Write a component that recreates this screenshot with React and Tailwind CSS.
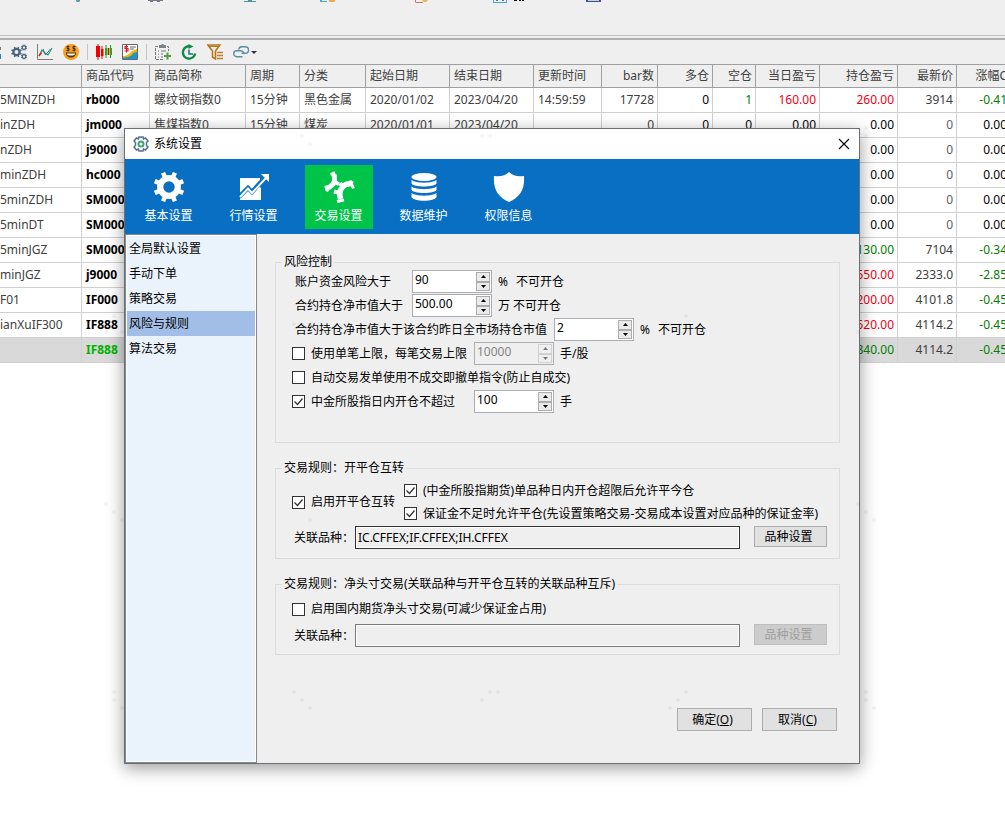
import React, { useState } from 'react';

const COLUMNS = [
  { title: '', width: 'w-[82px]', align: 'left' },
  { title: '商品代码', width: 'w-[68px]', align: 'left' },
  { title: '商品简称', width: 'w-[96px]', align: 'left' },
  { title: '周期', width: 'w-[54px]', align: 'left' },
  { title: '分类', width: 'w-[66px]', align: 'left' },
  { title: '起始日期', width: 'w-[84px]', align: 'left' },
  { title: '结束日期', width: 'w-[84px]', align: 'left' },
  { title: '更新时间', width: 'w-[68px]', align: 'left' },
  { title: 'bar数', width: 'w-[56px]', align: 'right' },
  { title: '多仓', width: 'w-[55px]', align: 'right' },
  { title: '空仓', width: 'w-[43px]', align: 'right' },
  { title: '当日盈亏', width: 'w-[64px]', align: 'right' },
  { title: '持仓盈亏', width: 'w-[78px]', align: 'right' },
  { title: '最新价', width: 'w-[59px]', align: 'right' },
  { title: '涨幅C%', width: 'w-[64px]', align: 'right' },
];

const ROWS = [
  ['5MINZDH', 'rb000', '螺纹钢指数0', '15分钟', '黑色金属', '2020/01/02', '2023/04/20', '14:59:59', '17728', '0', '1', '160.00', '260.00', '3914', '-0.41%'],
  ['inZDH', 'jm000', '焦煤指数0', '15分钟', '煤炭', '2020/01/01', '2023/04/20', '', '0', '0', '0', '0.00', '0.00', '0', '0.00%'],
  ['nZDH', 'j9000', '', '', '', '', '', '', '', '', '', '', '0.00', '0', '0.00%'],
  ['minZDH', 'hc000', '', '', '', '', '', '', '', '', '', '', '0.00', '0', '0.00%'],
  ['5minZDH', 'SM000', '', '', '', '', '', '', '', '', '', '', '0.00', '0', '0.00%'],
  ['5minDT', 'SM000', '', '', '', '', '', '', '', '', '', '', '0.00', '0', '0.00%'],
  ['5minJGZ', 'SM000', '', '', '', '', '', '', '', '', '', '', '-130.00', '7104', '-0.34%'],
  ['minJGZ', 'j9000', '', '', '', '', '', '', '', '', '', '', '550.00', '2333.0', '-2.85%'],
  ['F01', 'IF000', '', '', '', '', '', '', '', '', '', '', '200.00', '4101.8', '-0.45%'],
  ['ianXuIF300', 'IF888', '', '', '', '', '', '', '', '', '', '', '520.00', '4114.2', '-0.45%'],
  ['', 'IF888', '', '', '', '', '', '', '', '', '', '', '-840.00', '4114.2', '-0.45%'],
];

const SELECTED_ROW = 10;

const cellColor = (col, value, rowIndex) => {
  if (col === 1) return rowIndex === SELECTED_ROW ? 'font-bold text-[#00b400]' : 'font-bold text-black';
  if (col === 9) return 'text-black';
  if (col === 10) return value === '0' ? 'text-black' : 'text-[#008000]';
  if (col === 11 || col === 12 || col === 14) {
    if (value.startsWith('-')) return 'text-[#008000]';
    return parseFloat(value) > 0 ? 'text-[#f00014]' : 'text-black';
  }
  if (col === 13 && value === '0') return 'text-[#606060]';
  return 'text-[#404040]';
};

const RibbonIcons = () => (
  <svg width="610" height="3" viewBox="0 0 610 3" aria-hidden="true">
    <path d="M76 0h4v1l-1 1h-2l-1-1z" fill="#5a9aa8" />
    <path d="M148 0h15v1h-3v1h-3v-1h-4v1h-3v-1h-2z" fill="#77778c" />
    <path d="M244 1h12v1h-12zM248 0h4v1h-4z" fill="#4f939c" />
    <path d="M320 0h2v1h5v1h-7z" fill="#4aa8c8" />
    <path d="M329 0h6v1l-1 1h-4l-1-1z" fill="#f2a93c" />
    <path d="M415 0h1v2h7v1h-7l-1-1z" fill="#c07a60" />
    <path d="M422 0h6l-2 2h-2z" fill="#f2b04c" />
    <path d="M493 0h1v2h12v-2h1v3h-14z" fill="#4aa8c8" />
    <path d="M496 0h2v1h-2zM502 0h2v1h-2z" fill="#3a7fb0" />
    <path d="M514 0h3v1h-3zM519 0h2v1h-2zM522 0h2v1h-2z" fill="#111" />
    <path d="M586 0h15v2h-15z" fill="#3f5480" />
    <path d="M588 0h11v1h-11z" fill="#c5cedd" />
  </svg>
);

const Cog = ({ cx, cy, r, color, teeth = 8 }) => (
  <g stroke={color} fill="none">
    <circle cx={cx} cy={cy} r={r} strokeWidth={r * 0.7} />
    {Array.from({ length: teeth }, (_, i) => (
      <path
        key={i}
        d={`M${cx} ${cy - r}V${cy - r * 1.75}`}
        strokeWidth={r * 0.5}
        transform={`rotate(${(i + 0.5) * (360 / teeth)} ${cx} ${cy})`}
      />
    ))}
  </g>
);

const toolIcons = {
  cogs: (
    <>
      <Cog cx={5.5} cy={8} r={3.1} color="#46617e" />
      <Cog cx={13} cy={3.6} r={1.8} color="#46617e" />
      <Cog cx={13} cy={12.4} r={1.8} color="#46617e" />
    </>
  ),
  curve: (
    <>
      <path d="M.5 0v15.5H16" stroke="#7c7c7c" fill="none" />
      <path d="M2 12l3-6 3 3 3 2 4-7" stroke="#1fa05c" strokeWidth="1.2" fill="none" />
      <path d="M2 12l2.500-3.500" stroke="#e02020" strokeWidth="1.4" />
      <path d="M6 5l2.500 6 5-6" stroke="#4a6aa8" fill="none" />
    </>
  ),
  smile: (
    <>
      <circle cx="8" cy="8" r="8" fill="#f7a11a" />
      <path d="M3 8.500h10c0 3.500-2 5-5 5s-5-1.500-5-5z" fill="#5a3207" />
      <path d="M4 9.500h8c0 1.500-1 2-4 2s-4-.5-4-2z" fill="#fff" />
      <path d="M6.500 2.500H4v2h2v2H3.500M5 1.500v6M12.500 2.500H10v2h2v2H9.500M11 1.500v6" stroke="#3b2206" strokeWidth=".9" fill="none" />
    </>
  ),
  candles: (
    <>
      <path d="M2 0v16M6 2v13" stroke="#f00000" />
      <path d="M0 2h4v11H0zM5 5h2.500v7H5z" fill="#f00000" />
      <path d="M10 1v13M14.500 1v13" stroke="#2a9a1a" />
      <path d="M9 4h2.500v7H9zM13.500 4h2.500v7h-2.500z" fill="#35a31c" />
      <path d="M12.500 4v7" stroke="#f00000" />
    </>
  ),
  report: (
    <>
      <path d="M.5.5h15v15H.5z" fill="#fff" stroke="#666" />
      <path d="M1 12c4 0 6-2 9-5 2-1 3-1 5-2v5l-6 5H1z" fill="#f0b400" />
      <path d="M1 13.500c5 0 8-1 10-4 1-1 2-1 4-1.500v7H1z" fill="#1b95d2" />
      <path d="M6 2.500H3v2h3v2.500H2.500M4.500 1v7.500" stroke="#d4202c" strokeWidth="1.200" fill="none" />
      <path d="M8 3h6M8 5h4" stroke="#666" />
    </>
  ),
  listAdd: (
    <>
      <path d="M8 15.500H.5v-13H3M12 2.500h1.500V7" stroke="#6f787e" fill="none" strokeDasharray="3 1" />
      <path d="M4 1h2l1-1h1l1 1h2v3H4z" fill="#7a848a" />
      <path d="M3 7h1M6 7h5M3 10h1M6 10h2M3 13h1M6 13h2" stroke="#6f787e" />
      <path d="M12.500 8.500v7M9 12h7" stroke="#5a9a35" strokeWidth="2" />
    </>
  ),
  refresh: (
    <>
      <path d="M8 2.200A6.200 6.200 0 1 0 14.200 9.500" stroke="#0e8a4a" strokeWidth="2.400" fill="none" />
      <path d="M7.500 0v5l5-2.500z" fill="#0e8a4a" />
      <path d="M8 5.500V10h4" stroke="#1c6e8c" strokeWidth="1.500" fill="none" />
    </>
  ),
  filter: (
    <>
      <path d="M.8 1h12L8.500 7v8l-3-2V7z" fill="none" stroke="#b8761c" strokeWidth="1.600" />
      <path d="M2 2.500h9" stroke="#b8761c" />
      <path d="M10 8.500h6M10 11.500h6M10 14.500h6" stroke="#c0812a" strokeWidth="1.600" />
    </>
  ),
  link: (
    <g fill="none" stroke="#5a8ca8" strokeWidth="1.400">
      <path d="M9.500 12.700H3.700a3 3 0 0 1 0-6H8a3 3 0 0 1 2.800 3.500" />
      <path d="M5.800 5.500A3 3 0 0 1 8.500 2.700h3.800a3 3 0 0 1 0 6.500H8.500" />
    </g>
  ),
};

const ToolButton = ({ name, label }) => (
  <button type="button" aria-label={label} className="h-4 w-4 shrink-0">
    <svg width="16" height="16" viewBox="0 0 16 16">{toolIcons[name]}</svg>
  </button>
);

const Toolbar = () => (
  <div className="flex h-6 items-center gap-2.5 overflow-hidden bg-[#efefef]">
    <svg width="1" height="16" viewBox="0 0 1 16" aria-hidden="true">
      <path d="M0 3h1v3H0z" fill="#777" />
      <path d="M0 10h1v5H0z" fill="#2389b8" />
    </svg>
    <ToolButton name="cogs" label="设置" />
    <ToolButton name="curve" label="曲线" />
    <ToolButton name="smile" label="盈亏" />
    <div className="-ml-0.5 flex items-center gap-2">
      <span className="h-4 w-px bg-[#c4c4c4]" />
      <ToolButton name="candles" label="K线" />
    </div>
    <ToolButton name="report" label="报表" />
    <div className="-ml-0.5 flex items-center gap-2">
      <span className="h-4 w-px bg-[#c4c4c4]" />
      <ToolButton name="listAdd" label="添加" />
    </div>
    <ToolButton name="refresh" label="刷新" />
    <ToolButton name="filter" label="过滤" />
    <div className="flex items-center gap-0.5">
      <ToolButton name="link" label="链接" />
      <svg width="6" height="3" viewBox="0 0 6 3" aria-hidden="true">
        <path d="M0 0h6L3 3z" fill="#333" />
      </svg>
    </div>
  </div>
);

const QuoteTable = () => (
  <div className="overflow-hidden">
    <table className="w-[1021px] table-fixed border-separate border-spacing-0">
      <thead>
        <tr className="h-6 bg-[#efefef] text-[#404040]">
          {COLUMNS.map((col, i) => (
            <th
              key={i}
              className={`${col.width} border-y border-r border-[#a0a0a0] py-0 pr-[3px] pl-1 font-normal whitespace-nowrap ${
                col.align === 'right' ? 'text-right' : 'text-left'
              }`}
            >
              {col.title}
            </th>
          ))}
        </tr>
      </thead>
      <tbody>
        {ROWS.map((row, r) => (
          <tr key={r} className={`h-[25px] ${r === SELECTED_ROW ? 'bg-[#d9d9d9]' : 'bg-white'}`}>
            {row.map((value, c) => (
              <td
                key={c}
                className={`overflow-hidden border-r border-b border-[#d0d0d0] py-0 pr-[3px] whitespace-nowrap ${
                  c === 0 ? 'pl-0' : 'pl-1'
                } ${COLUMNS[c].align === 'right' ? 'text-right' : 'text-left'} ${cellColor(c, value, r)}`}
              >
                {value}
              </td>
            ))}
          </tr>
        ))}
      </tbody>
    </table>
  </div>
);

const tabIcons = {
  basic: <Cog cx={16} cy={16} r={8.8} color="#fff" />,
  market: (
    <>
      <path d="M2 7h20v22H2z" fill="#fff" />
      <path d="M1 26l9-9 4 4 8-9 2-2" stroke="#086fc2" strokeWidth="4.500" fill="none" />
      <path d="M2 26l8-8.500 4 4.500L28 7" stroke="#fff" strokeWidth="2" fill="none" />
      <path d="M23 3h8v8l-2.500-2.500-3-3z" fill="#fff" />
      <path d="M16 24l7-8v13h-7z" fill="#fff" />
    </>
  ),
  trade: (
    <>
      <g fill="none" stroke="#fff">
        <path d="M11.500 3c-1 4 1.500 6-1 9.500S5 17 2 17.500" strokeWidth="5" />
        <path d="M7.500 3.500l4.500-2M2.500 15l2.500 5.500" strokeWidth="2.500" />
        <path d="M11 11l5 2" strokeWidth="4" />
        <path d="M30 13c-5-1-8 0-10.500 3s-3.500 7-2 12" strokeWidth="5.500" />
        <path d="M27 9.500l3.500 8M14 30.500l7-1.500" strokeWidth="3" />
        <path d="M20 16l-3-4M17 22l-6-1.500" strokeWidth="4" />
      </g>
      <path d="M9 17.500l3-1 1.500 1.500 2-2.500" fill="none" stroke="#00c447" />
    </>
  ),
  data: (
    <>
      <ellipse cx="16" cy="6" rx="12.500" ry="4" fill="#fff" />
      <path d="M3.500 9c4 3.500 21 3.500 25 0v3.500c-2 4-23 4-25 0zM3.500 15.500c4 3.500 21 3.500 25 0V19c-2 4-23 4-25 0zM3.500 22c4 3.500 21 3.500 25 0v4c-2 5-23 5-25 0z" fill="#fff" />
    </>
  ),
  rights: <path d="M16 1c4 4 9 5 15 4 1 13-4 21-15 26C5 26 0 18 1 5c6 1 11 0 15-4z" fill="#fff" />,
};

const TABS = [
  { id: 'basic', label: '基本设置' },
  { id: 'market', label: '行情设置' },
  { id: 'trade', label: '交易设置' },
  { id: 'data', label: '数据维护' },
  { id: 'rights', label: '权限信息' },
];

const MENU = ['全局默认设置', '手动下单', '策略交易', '风险与规则', '算法交易'];

const SpinBox = ({ id, value, label, disabled = false }) => (
  <span className={`flex h-[23px] w-20 shrink-0 border border-[#abadb3] p-px ${disabled ? 'bg-[#efefef]' : 'bg-white'}`}>
    <input
      id={id}
      type="text"
      inputMode="decimal"
      aria-label={label}
      defaultValue={value}
      disabled={disabled}
      className="h-4 min-w-0 flex-1 bg-transparent pl-px text-black outline-none disabled:text-[#848484]"
    />
    <span className="flex w-3.5 shrink-0 flex-col">
      {['增加', '减少'].map((name, i) => (
        <button
          key={name}
          type="button"
          aria-label={name}
          disabled={disabled}
          className={`flex flex-1 items-center justify-center border ${
            disabled ? 'border-[#d0d0d0] bg-[#efefef]' : 'border-[#adadad] bg-[#eaeaea]'
          }`}
        >
          <svg width="5" height="3" viewBox="0 0 5 3">
            <path d={i === 0 ? 'M0 3L2.500 0 5 3z' : 'M0 0l2.500 3L5 0z'} fill={disabled ? '#777' : '#000'} />
          </svg>
        </button>
      ))}
    </span>
  </span>
);

const Check = ({ label, checked = false, className = '' }) => (
  <label className={`flex items-center gap-1.5 whitespace-nowrap ${className}`}>
    <span className="grid shrink-0 place-items-center">
      <input
        type="checkbox"
        defaultChecked={checked}
        className="peer col-start-1 row-start-1 h-[13px] w-[13px] appearance-none border border-[#333] bg-white"
      />
      <svg
        width="13"
        height="13"
        viewBox="0 0 13 13"
        className="pointer-events-none invisible col-start-1 row-start-1 peer-checked:visible"
      >
        <path d="M2.500 6.500l3 3 5-6" fill="none" stroke="#333" strokeWidth="1.300" />
      </svg>
    </span>
    {label}
  </label>
);

const Group = ({ title, className = '', children }) => (
  <fieldset className={`min-w-0 border border-[#dcdcdc] ${className}`}>
    <legend className="ml-1.5 px-0.5 leading-4">{title}</legend>
    {children}
  </fieldset>
);

const VarietyRow = ({ id, value, disabled = false }) => (
  <div className="flex items-start pt-px pr-3 pl-[18px]">
    <label htmlFor={id} className="w-[61px] shrink-0 leading-6 whitespace-nowrap">
      关联品种：
    </label>
    <input
      id={id}
      type="text"
      readOnly
      disabled={disabled}
      defaultValue={value}
      className="h-[23px] min-w-0 flex-1 border border-[#333] bg-[#efefef] px-0.5 text-black shadow-[inset_0_0_0_1px_#fff] outline-none disabled:border-[#7a7a7a]"
    />
    <button
      type="button"
      disabled={disabled}
      className="ml-3.5 h-[21px] w-[73px] shrink-0 border border-[#adadad] bg-[#e1e1e1] pr-1 disabled:border-[#bfbfbf] disabled:bg-[#ccc] disabled:text-[#a0a0a0]"
    >
      品种设置
    </button>
  </div>
);

const RiskPanel = () => (
  <div className="flex-1 pt-5 pr-[19px] pb-8 pl-[18px]">
    <Group title="风险控制" className="pb-7">
      <div className="flex h-6 items-center pb-px pl-[19px]">
        <label htmlFor="fund-risk" className="w-[117px]">账户资金风险大于</label>
        <SpinBox id="fund-risk" value="90" />
        <span className="ml-1.5">%</span>
        <span className="ml-2">不可开仓</span>
      </div>
      <div className="flex h-6 items-center pb-px pl-[19px]">
        <label htmlFor="net-value" className="w-[117px]">合约持仓净市值大于</label>
        <SpinBox id="net-value" value="500.00" />
        <span className="ml-1.5">万 不可开仓</span>
      </div>
      <div className="flex h-6 items-center pb-px pl-[19px]">
        <label htmlFor="market-ratio" className="w-[259px]">合约持仓净市值大于该合约昨日全市场持仓市值</label>
        <SpinBox id="market-ratio" value="2" />
        <span className="ml-1.5">%</span>
        <span className="ml-2">不可开仓</span>
      </div>
      <div className="flex h-6 items-center pb-px pl-4">
        <Check label="使用单笔上限，每笔交易上限" className="w-[182px]" />
        <SpinBox value="10000" label="每笔交易上限" disabled />
        <span className="ml-1.5">手/股</span>
      </div>
      <div className="flex h-6 items-center pb-px pl-4">
        <Check label="自动交易发单使用不成交即撤单指令(防止自成交)" />
      </div>
      <div className="flex h-6 items-center pb-px pl-4">
        <Check label="中金所股指日内开仓不超过" checked className="w-[182px]" />
        <SpinBox value="100" label="日内开仓上限" />
        <span className="ml-1.5">手</span>
      </div>
    </Group>

    <Group title="交易规则：开平仓互转" className="mt-[17px] pt-[3px] pb-2">
      <div className="flex items-center pl-4">
        <Check label="启用开平仓互转" checked className="w-28" />
        <div>
          <Check label="(中金所股指期货)单品种日内开仓超限后允许平今仓" checked className="h-[23px]" />
          <Check label="保证金不足时允许平仓(先设置策略交易-交易成本设置对应品种的保证金率)" checked className="h-[23px]" />
        </div>
      </div>
      <VarietyRow id="swap-varieties" value="IC.CFFEX;IF.CFFEX;IH.CFFEX" />
    </Group>

    <Group title="交易规则：净头寸交易(关联品种与开平仓互转的关联品种互斥)" className="mt-[17px] pt-[5px] pb-1.5">
      <Check label="启用国内期货净头寸交易(可减少保证金占用)" className="mb-0.5 h-6 pl-4" />
      <VarietyRow id="net-varieties" value="" disabled />
    </Group>

    <div className="mt-[53px] flex justify-end gap-2.5 pr-[3px]">
      <button type="button" className="h-[23px] w-[75px] border border-[#adadad] bg-[#e1e1e1] pr-1">
        确定(<u>O</u>)
      </button>
      <button type="button" className="h-[23px] w-[75px] border border-[#adadad] bg-[#e1e1e1] pr-1">
        取消(<u>C</u>)
      </button>
    </div>
  </div>
);

const SettingsDialog = () => {
  const [tab, setTab] = useState('trade');
  const [menu, setMenu] = useState('风险与规则');

  return (
    <div
      role="dialog"
      aria-label="系统设置"
      className="absolute top-32 left-[124px] w-[736px] border border-[#6b6e72] bg-[#efefef] text-black shadow-[0_4px_16px_rgba(0,0,0,0.4)]"
    >
      {/* Title bar */}
      <div className="flex h-[30px] items-center bg-white pr-[7px] pl-2">
        <svg width="16" height="16" viewBox="0 0 16 16" aria-hidden="true">
          <path
            d="M6 1h4l.5 2 2-1 2.500 3-1.500 1.500v3L15 11l-2.500 3-2-1-.5 2H6l-.5-2-2 1L1 11l1.500-1.500v-3L1 5l2.500-3 2 1z"
            fill="none"
            stroke="#52718c"
            strokeWidth="1.500"
          />
          <circle cx="8" cy="8" r="2.500" fill="none" stroke="#43a374" strokeWidth="2" />
        </svg>
        <span className="ml-[5px] flex-1">系统设置</span>
        <button type="button" aria-label="关闭" className="grid h-4 w-4 place-items-center">
          <svg width="12" height="12" viewBox="0 0 12 12">
            <path d="M1 1l10 10M11 1L1 11" stroke="#000" strokeWidth="1.100" />
          </svg>
        </button>
      </div>

      {/* Section tabs */}
      <div className="flex h-[75px] gap-[17px] bg-[#086fc2] pt-1.5 pl-2.5">
        {TABS.map((t) => (
          <button
            key={t.id}
            type="button"
            onClick={() => setTab(t.id)}
            className={`flex h-16 w-[68px] flex-col items-center pt-1.5 pr-px text-white ${
              tab === t.id ? 'bg-[#00c447]' : ''
            }`}
          >
            <svg width="32" height="32" viewBox="0 0 32 32" aria-hidden="true">{tabIcons[t.id]}</svg>
            <span className="mt-[5px]">{t.label}</span>
          </button>
        ))}
      </div>

      <div className="flex">
        <div className="w-[132px] shrink-0 border border-[#828790] bg-white p-px">
          <ul className="h-full bg-[#eaf3fb]">
            {MENU.map((item) => (
              <li key={item}>
                <button
                  type="button"
                  onClick={() => setMenu(item)}
                  className={`block h-[25px] w-full pl-0.5 text-left ${menu === item ? 'bg-[#a2bde6]' : ''}`}
                >
                  {item}
                </button>
              </li>
            ))}
          </ul>
        </div>
        <RiskPanel />
      </div>
    </div>
  );
};

const DOTS = [
  [106, 504], [114, 512], [122, 520], [310, 520], [114, 692], [114, 700], [122, 708],
  [294, 692], [302, 700], [310, 708], [490, 692], [482, 700], [498, 692], [686, 692], [678, 700], [670, 708],
  [866, 692], [866, 700], [874, 708], [866, 128], [866, 136], [866, 316], [858, 332], [874, 332],
  [114, 316], [106, 332], [122, 332], [302, 136], [310, 144], [482, 136], [490, 136],
  [294, 324], [302, 324], [310, 324], [686, 316], [670, 324], [858, 504], [866, 512], [874, 520],
];

// Faint dotted screen watermark
const Watermark = () => (
  <svg width="880" height="720" className="pointer-events-none absolute top-0 left-0" aria-hidden="true">
    {DOTS.map(([x, y]) => (
      <circle key={`${x}-${y}`} cx={x} cy={y} r="2" fill="#000" fillOpacity="0.045" />
    ))}
  </svg>
);

export default function App() {
  return (
    <div className="relative min-h-screen overflow-hidden bg-white font-['Noto_Sans','Noto_Sans_CJK_SC',sans-serif] text-xs">
      <div className="h-9 border-b border-[#c0c0c0] bg-[#efefef]">
        <RibbonIcons />
      </div>
      <div className="h-1 border-b-2 border-[#b0b0b0] bg-[#efefef]" />
      <Toolbar />
      <QuoteTable />
      <SettingsDialog />
      <Watermark />
    </div>
  );
}
